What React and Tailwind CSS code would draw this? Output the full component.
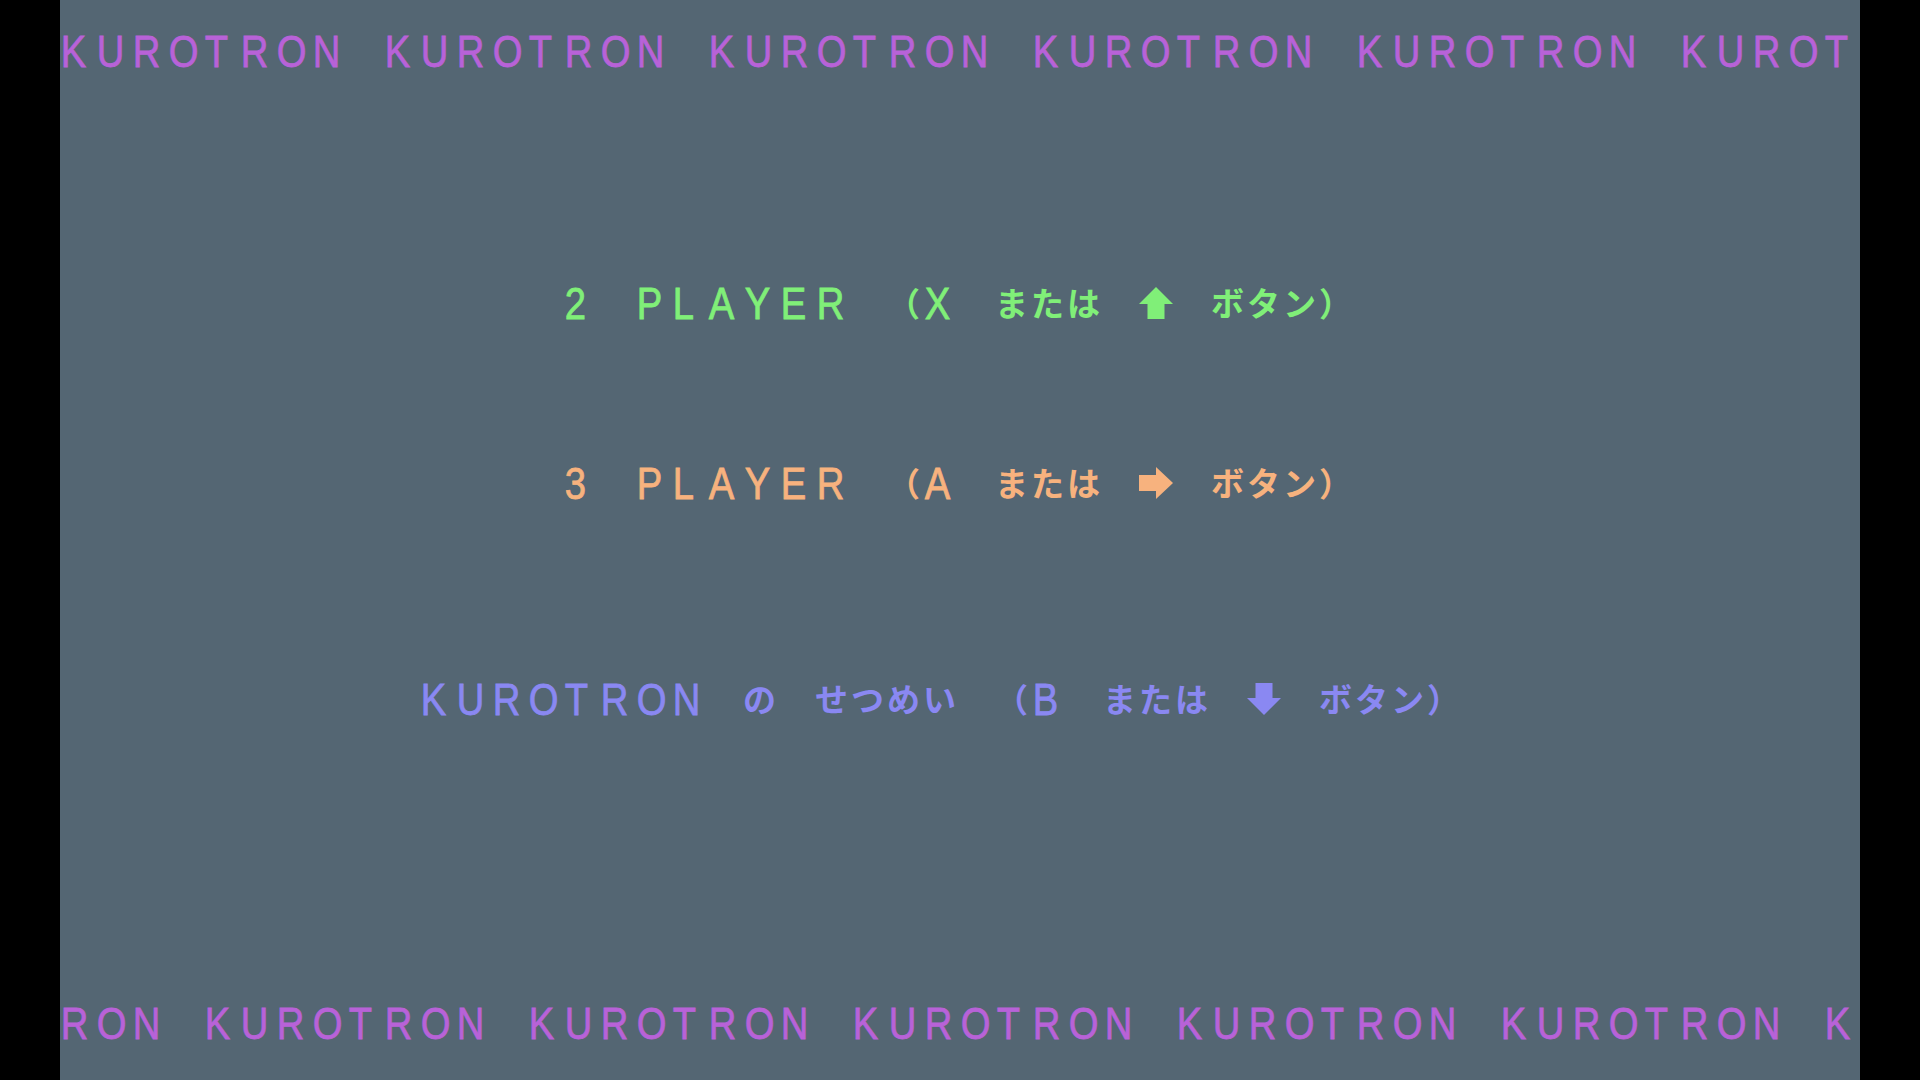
import React from 'react';

// 50 x 30 character grid, 36px cells
const COLS = 50;
const ROWS = 30;
const BANNER = 'KUROTRON ';

const banner = (offset) =>
    Array.from({ length: COLS }, (_, c) => BANNER[(c + offset) % BANNER.length]);

const line = (text, col) => {
    const cells = Array(COLS).fill(' ');
    [...text].forEach((ch, i) => { cells[col + i] = ch; });
    return cells;
};

const rows = {
    1: { chars: banner(0), color: 'text-[#b862d8]', fill: '#b862d8' },
    8: { chars: line('2 PLAYER （X または ↑ ボタン）', 14), color: 'text-[#80ef78]', fill: '#80ef78' },
    13: { chars: line('3 PLAYER （A または → ボタン）', 14), color: 'text-[#f7b27e]', fill: '#f7b27e' },
    19: { chars: line('KUROTRON の せつめい （B または ↓ ボタン）', 10), color: 'text-[#8a88f2]', fill: '#8a88f2' },
    28: { chars: banner(5), color: 'text-[#b862d8]', fill: '#b862d8' },
};

const Arrow = ({ dir, fill }) => {
    if (dir === '↑') {
        return (
            <svg width="34" height="32" viewBox="0 0 34 32">
                <polygon points="17,0 34,17 25.5,17 25.5,32 8.5,32 8.5,17 0,17" fill={fill} />
            </svg>
        );
    }
    if (dir === '→') {
        return (
            <svg width="34" height="32" viewBox="0 0 34 32">
                <polygon points="0,8 17,8 17,0 34,16 17,32 17,24 0,24" fill={fill} />
            </svg>
        );
    }
    return (
        <svg width="34" height="32" viewBox="0 0 34 32">
            <polygon points="8.5,0 25.5,0 25.5,15 34,15 17,32 0,15 8.5,15" fill={fill} />
        </svg>
    );
};

const Cell = ({ ch, fill }) => {
    let inner = null;
    let align = 'justify-start';
    if (ch === '↑' || ch === '→' || ch === '↓') {
        inner = (
            <span className="inline-block -translate-x-[2px] -translate-y-[3px]">
                <Arrow dir={ch} fill={fill} />
            </span>
        );
        align = 'justify-center';
    } else if (ch !== ' ' && ch.charCodeAt(0) < 128) {
        inner = (
            <span className="inline-block pl-[1px] origin-left scale-x-[0.85] -translate-y-[3px] text-[45px] leading-none font-['Liberation_Sans',sans-serif] [-webkit-text-stroke:0.8px_currentColor]">
                {ch}
            </span>
        );
    } else if (ch !== ' ') {
        inner = (
            <span className="inline-block -ml-[1px] -translate-y-[4px] text-[33px] leading-none font-bold font-['Noto_Sans_CJK_JP',sans-serif]">
                {ch}
            </span>
        );
    }
    return <div className={`w-[36px] h-[36px] shrink-0 flex items-center ${align}`}>{inner}</div>;
};

export default function App() {
    return (
        <div className="w-full h-[1080px] bg-black flex justify-center overflow-hidden">
            <div className="w-[1800px] h-[1080px] bg-[#546673] flex flex-col">
                {Array.from({ length: ROWS }, (_, r) => {
                    const row = rows[r];
                    if (!row) return <div key={r} className="h-[36px] shrink-0" />;
                    return (
                        <div key={r} className={`h-[36px] shrink-0 flex ${row.color}`}>
                            {row.chars.map((ch, c) => (
                                <Cell key={c} ch={ch} fill={row.fill} />
                            ))}
                        </div>
                    );
                })}
            </div>
        </div>
    );
}
